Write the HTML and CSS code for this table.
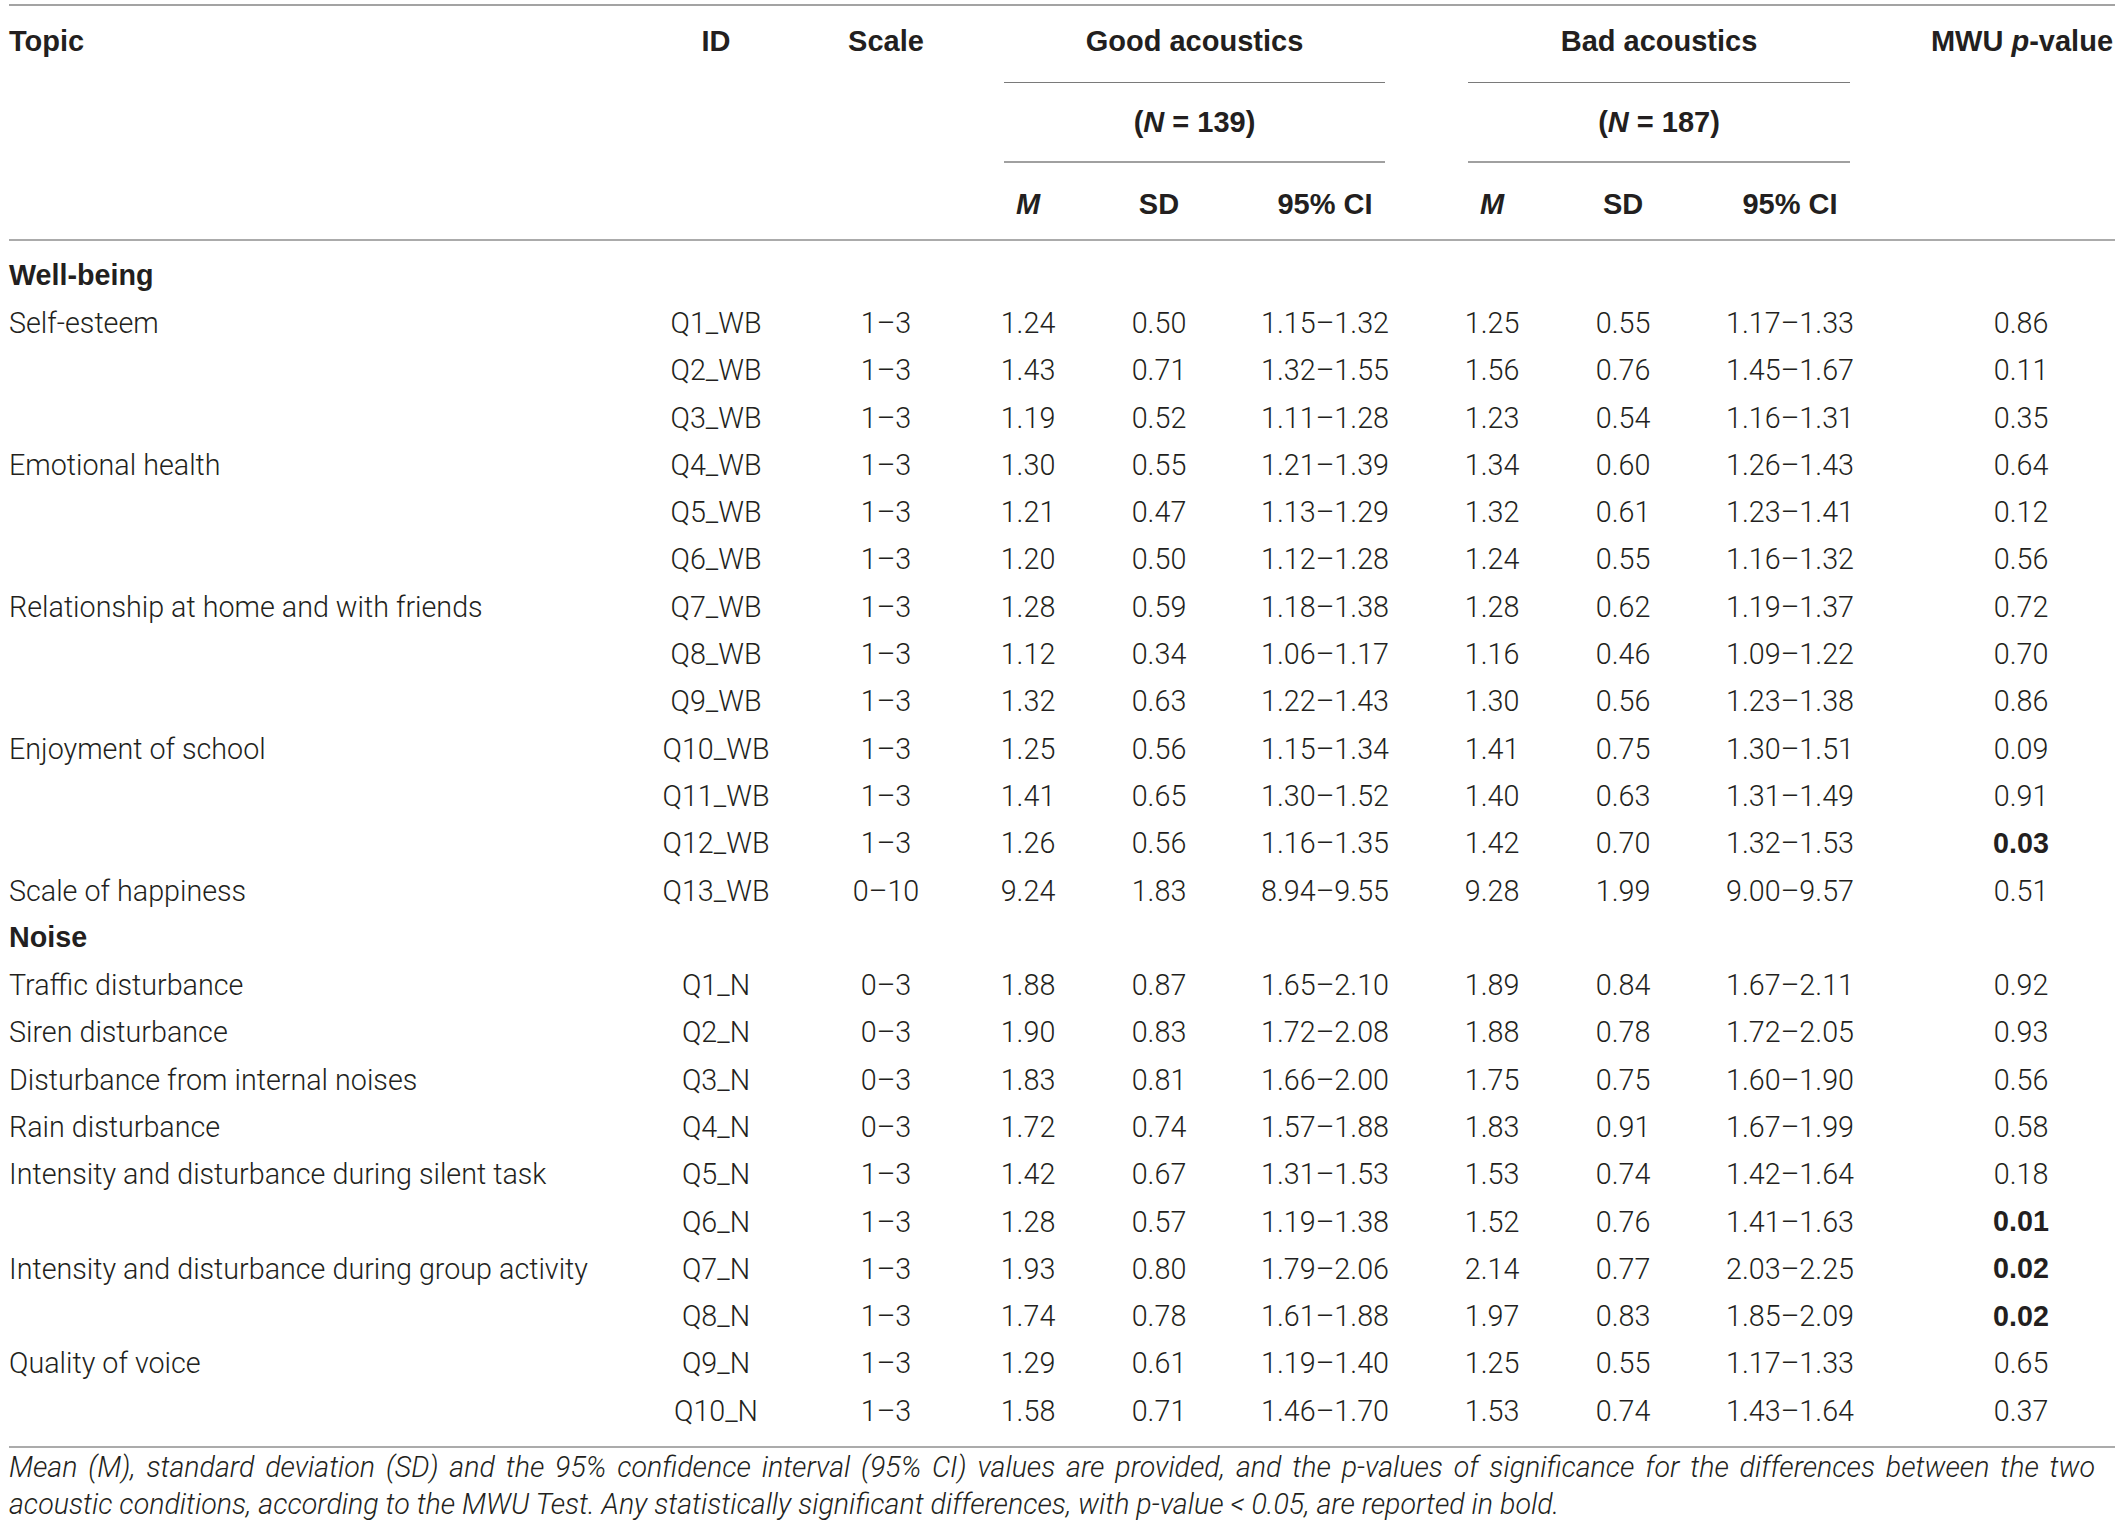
FILE: index.html
```html
<!DOCTYPE html>
<html lang="en">
<head>
<meta charset="utf-8">
<title>Table</title>
<link rel="stylesheet" href="styles.css">
</head>
<body>
<div class="page">
<table class="data">
  <colgroup>
    <col class="c-topic"><col class="c-id"><col class="c-scale">
    <col class="c-gm"><col class="c-gsd"><col class="c-gci">
    <col class="c-bm"><col class="c-bsd"><col class="c-bci">
    <col class="c-mwu">
  </colgroup>
  <thead>
    <tr class="h1">
      <th class="left">Topic</th>
      <th>ID</th>
      <th>Scale</th>
      <th colspan="3" class="grp"><div class="rule good r1"><span>Good acoustics</span></div></th>
      <th colspan="3" class="grp"><div class="rule bad r1"><span>Bad acoustics</span></div></th>
      <th class="mwu-h">MWU <i>p</i>-value</th>
    </tr>
    <tr class="h2">
      <th></th><th></th><th></th>
      <th colspan="3" class="grp"><div class="rule good r2"><span>(<i>N</i> = 139)</span></div></th>
      <th colspan="3" class="grp"><div class="rule bad r2"><span>(<i>N</i> = 187)</span></div></th>
      <th></th>
    </tr>
    <tr class="h3">
      <th></th><th></th><th></th>
      <th><i>M</i></th><th>SD</th><th>95% CI</th>
      <th><i>M</i></th><th>SD</th><th>95% CI</th>
      <th></th>
    </tr>
  </thead>
  <tbody>
    <tr class="gap"><td colspan="10"></td></tr>
    <tr class="sec"><td class="left">Well-being</td><td colspan="9"></td></tr>
    <tr><td class="left">Self-esteem</td><td>Q1_WB</td><td>1–3</td><td>1.24</td><td>0.50</td><td>1.15–1.32</td><td>1.25</td><td>0.55</td><td>1.17–1.33</td><td class="p">0.86</td></tr>
    <tr><td class="left"></td><td>Q2_WB</td><td>1–3</td><td>1.43</td><td>0.71</td><td>1.32–1.55</td><td>1.56</td><td>0.76</td><td>1.45–1.67</td><td class="p">0.11</td></tr>
    <tr><td class="left"></td><td>Q3_WB</td><td>1–3</td><td>1.19</td><td>0.52</td><td>1.11–1.28</td><td>1.23</td><td>0.54</td><td>1.16–1.31</td><td class="p">0.35</td></tr>
    <tr><td class="left">Emotional health</td><td>Q4_WB</td><td>1–3</td><td>1.30</td><td>0.55</td><td>1.21–1.39</td><td>1.34</td><td>0.60</td><td>1.26–1.43</td><td class="p">0.64</td></tr>
    <tr><td class="left"></td><td>Q5_WB</td><td>1–3</td><td>1.21</td><td>0.47</td><td>1.13–1.29</td><td>1.32</td><td>0.61</td><td>1.23–1.41</td><td class="p">0.12</td></tr>
    <tr><td class="left"></td><td>Q6_WB</td><td>1–3</td><td>1.20</td><td>0.50</td><td>1.12–1.28</td><td>1.24</td><td>0.55</td><td>1.16–1.32</td><td class="p">0.56</td></tr>
    <tr><td class="left">Relationship at home and with friends</td><td>Q7_WB</td><td>1–3</td><td>1.28</td><td>0.59</td><td>1.18–1.38</td><td>1.28</td><td>0.62</td><td>1.19–1.37</td><td class="p">0.72</td></tr>
    <tr><td class="left"></td><td>Q8_WB</td><td>1–3</td><td>1.12</td><td>0.34</td><td>1.06–1.17</td><td>1.16</td><td>0.46</td><td>1.09–1.22</td><td class="p">0.70</td></tr>
    <tr><td class="left"></td><td>Q9_WB</td><td>1–3</td><td>1.32</td><td>0.63</td><td>1.22–1.43</td><td>1.30</td><td>0.56</td><td>1.23–1.38</td><td class="p">0.86</td></tr>
    <tr><td class="left">Enjoyment of school</td><td>Q10_WB</td><td>1–3</td><td>1.25</td><td>0.56</td><td>1.15–1.34</td><td>1.41</td><td>0.75</td><td>1.30–1.51</td><td class="p">0.09</td></tr>
    <tr><td class="left"></td><td>Q11_WB</td><td>1–3</td><td>1.41</td><td>0.65</td><td>1.30–1.52</td><td>1.40</td><td>0.63</td><td>1.31–1.49</td><td class="p">0.91</td></tr>
    <tr><td class="left"></td><td>Q12_WB</td><td>1–3</td><td>1.26</td><td>0.56</td><td>1.16–1.35</td><td>1.42</td><td>0.70</td><td>1.32–1.53</td><td class="p sig">0.03</td></tr>
    <tr><td class="left">Scale of happiness</td><td>Q13_WB</td><td>0–10</td><td>9.24</td><td>1.83</td><td>8.94–9.55</td><td>9.28</td><td>1.99</td><td>9.00–9.57</td><td class="p">0.51</td></tr>
    <tr class="sec"><td class="left">Noise</td><td colspan="9"></td></tr>
    <tr><td class="left">Traffic disturbance</td><td>Q1_N</td><td>0–3</td><td>1.88</td><td>0.87</td><td>1.65–2.10</td><td>1.89</td><td>0.84</td><td>1.67–2.11</td><td class="p">0.92</td></tr>
    <tr><td class="left">Siren disturbance</td><td>Q2_N</td><td>0–3</td><td>1.90</td><td>0.83</td><td>1.72–2.08</td><td>1.88</td><td>0.78</td><td>1.72–2.05</td><td class="p">0.93</td></tr>
    <tr><td class="left">Disturbance from internal noises</td><td>Q3_N</td><td>0–3</td><td>1.83</td><td>0.81</td><td>1.66–2.00</td><td>1.75</td><td>0.75</td><td>1.60–1.90</td><td class="p">0.56</td></tr>
    <tr><td class="left">Rain disturbance</td><td>Q4_N</td><td>0–3</td><td>1.72</td><td>0.74</td><td>1.57–1.88</td><td>1.83</td><td>0.91</td><td>1.67–1.99</td><td class="p">0.58</td></tr>
    <tr><td class="left">Intensity and disturbance during silent task</td><td>Q5_N</td><td>1–3</td><td>1.42</td><td>0.67</td><td>1.31–1.53</td><td>1.53</td><td>0.74</td><td>1.42–1.64</td><td class="p">0.18</td></tr>
    <tr><td class="left"></td><td>Q6_N</td><td>1–3</td><td>1.28</td><td>0.57</td><td>1.19–1.38</td><td>1.52</td><td>0.76</td><td>1.41–1.63</td><td class="p sig">0.01</td></tr>
    <tr><td class="left">Intensity and disturbance during group activity</td><td>Q7_N</td><td>1–3</td><td>1.93</td><td>0.80</td><td>1.79–2.06</td><td>2.14</td><td>0.77</td><td>2.03–2.25</td><td class="p sig">0.02</td></tr>
    <tr><td class="left"></td><td>Q8_N</td><td>1–3</td><td>1.74</td><td>0.78</td><td>1.61–1.88</td><td>1.97</td><td>0.83</td><td>1.85–2.09</td><td class="p sig">0.02</td></tr>
    <tr><td class="left">Quality of voice</td><td>Q9_N</td><td>1–3</td><td>1.29</td><td>0.61</td><td>1.19–1.40</td><td>1.25</td><td>0.55</td><td>1.17–1.33</td><td class="p">0.65</td></tr>
    <tr><td class="left"></td><td>Q10_N</td><td>1–3</td><td>1.58</td><td>0.71</td><td>1.46–1.70</td><td>1.53</td><td>0.74</td><td>1.43–1.64</td><td class="p">0.37</td></tr>
    <tr class="gap end"><td colspan="10"></td></tr>
  </tbody>
</table>
<p class="note">Mean (M), standard deviation (SD) and the 95% confidence interval (95% CI) values are provided, and the p-values of significance for the differences between the two acoustic conditions, according to the MWU Test. Any statistically significant differences, with p-value &lt; 0.05, are reported in bold.</p>
</div>
</body>
</html>
```
FILE: styles.css
```css
html, body {
  margin: 0;
  padding: 0;
  background: #ffffff;
}

.page {
  padding: 4px 6px 0 9px;
  width: 2106px;
  color: #231f20;
  font-family: Roboto, "Liberation Sans", Arial, sans-serif;
  font-weight: 300;
  font-size: 28.7px;
}

.data {
  border-collapse: collapse;
  table-layout: fixed;
  width: 2106px;
  border-top: 2px solid #a3a3a3;
}

.c-topic { width: 601px; }
.c-id { width: 212px; }
.c-scale { width: 128px; }
.c-gm { width: 156px; }
.c-gsd { width: 106px; }
.c-gci { width: 226px; }
.c-bm { width: 108px; }
.c-bsd { width: 154px; }
.c-bci { width: 180px; }
.c-mwu { width: 235px; }

th, td {
  padding: 0;
  text-align: center;
  vertical-align: middle;
  white-space: nowrap;
}

th {
  font-family: "Liberation Sans", Arial, sans-serif;
  font-weight: 700;
  font-size: 29px;
  color: #231f20;
}

.left { text-align: left; }

thead tr.h1 th {
  height: 71px;
  padding-bottom: 6px;
}
thead tr.h1 th.grp { height: 77px; padding: 0; }

thead tr.h2 th { height: 80px; }
thead tr.h2 th.grp { padding: 0; }

thead tr.h3 th {
  height: 69px;
  padding-top: 7px;
  border-bottom: 2px solid #ababab;
}

.rule {
  display: flex;
  align-items: center;
  justify-content: center;
  box-sizing: border-box;
}

.rule.r1 {
  height: 77px;
  padding-bottom: 6px;
  border-bottom: 1px solid #7a7a7a;
}
.rule.r2 { height: 80px; border-bottom: 2px solid #a0a0a0; }

.rule.good { margin: 0 53px 0 54px; }
.rule.bad { margin: 0 30px 0 30px; }

th.mwu-h {
  text-align: right;
  padding-right: 2px;
}

tbody tr td { height: 47.3px; }

tbody tr.gap td { height: 11px; }
tbody tr.gap.end td { height: 12px; border-bottom: 2px solid #ababab; }

tbody tr.sec td.left {
  font-family: "Liberation Sans", Arial, sans-serif;
  font-weight: 700;
}

td.p { padding-left: 47px; }

td.sig {
  font-family: "Liberation Sans", Arial, sans-serif;
  font-weight: 700;
}

.note {
  margin: 1px 0 0 0;
  width: 2086px;
  font-style: italic;
  font-weight: 300;
  font-size: 28.6px;
  line-height: 37px;
  text-align: justify;
  color: #231f20;
}
```
